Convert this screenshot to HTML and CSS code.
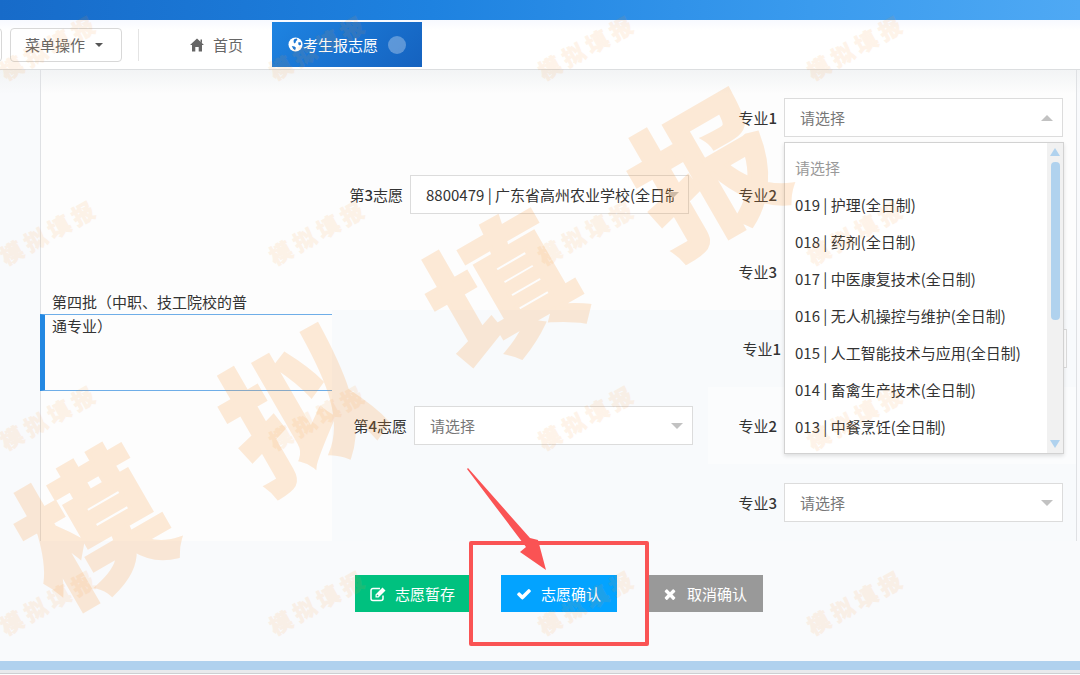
FILE: index.html
```
<!DOCTYPE html>
<html lang="zh-CN">
<head>
    <meta charset="utf-8">
    <title>考生报志愿</title>
    <link rel="stylesheet" href="styles.css">
</head>

<body>
    <div class="topbar"></div>

    <nav class="tabs">
        <button type="button" class="cut-btn" aria-label="back"></button>
        <button type="button" class="menu-btn">菜单操作 <span class="caret"></span></button>
        <span class="divider"></span>
        <a href="#" class="home">
            <svg class="icon" viewBox="0 0 16 16"><path d="M8 1.500L15 8h-2v6.500H9.700V10H6.300v4.500H3V8H1zM11.500 2.500H13V6l-1.500-1.400z"/></svg>
            首页
        </a>
        <a href="#" class="tab">
            <svg class="globe" viewBox="0 0 16 16"><circle cx="8" cy="8" r="7.500"/><path class="land" d="M7 2L9.500 1.500 10 3 8.500 4.500 8 6 7 7 6 5.500 6 3.500zM11 5.500L13.500 5.500 14 8 12.500 9 11 8zM4 9.500L7 10 8.500 11.500 7.500 14 5.500 12.500z"/></svg>
            <span>考生报志愿</span>
            <i class="dot"></i>
        </a>
    </nav>

    <main class="content">
        <div class="panel">
            <div class="batch">
                <div class="batch-hover"></div>
                <p>第四批（中职、技工院校的普通专业）</p>
            </div>

            <div class="school">
                <label for="school3">第<b>3</b>志愿</label>
                <div class="select filled">
                    <select id="school3"><option>8800479 | 广东省高州农业学校(全日制)</option></select>
                </div>
            </div>
            <div class="majors">
                <div class="field">
                    <label for="m31">专业<b>1</b></label>
                    <div class="select open">
                        <select id="m31"><option>请选择</option></select>
                        <div class="dropdown">
                            <ul>
                                <li class="tips">请选择</li>
                                <li>019 | 护理(全日制)</li>
                                <li>018 | 药剂(全日制)</li>
                                <li>017 | 中医康复技术(全日制)</li>
                                <li>016 | 无人机操控与维护(全日制)</li>
                                <li>015 | 人工智能技术与应用(全日制)</li>
                                <li>014 | 畜禽生产技术(全日制)</li>
                                <li>013 | 中餐烹饪(全日制)</li>
                            </ul>
                            <div class="scroll">
                                <span class="up"></span>
                                <span class="thumb"></span>
                                <span class="down"></span>
                            </div>
                        </div>
                    </div>
                </div>
                <div class="field">
                    <label for="m32">专业<b>2</b></label>
                    <div class="select"><select id="m32"><option>请选择</option></select></div>
                </div>
                <div class="field">
                    <label for="m33">专业<b>3</b></label>
                    <div class="select"><select id="m33"><option>请选择</option></select></div>
                </div>
            </div>

            <div class="school even">
                <label for="school4">第<b>4</b>志愿</label>
                <div class="select">
                    <select id="school4"><option>请选择</option></select>
                </div>
            </div>
            <div class="majors even">
                <div class="field wide">
                    <label for="m41">专业<b>1</b></label>
                    <div class="select"><select id="m41"><option>请选择</option></select></div>
                </div>
                <div class="field light">
                    <label for="m42">专业<b>2</b></label>
                    <div class="select"><select id="m42"><option>请选择</option></select></div>
                </div>
                <div class="field">
                    <label for="m43">专业<b>3</b></label>
                    <div class="select"><select id="m43"><option>请选择</option></select></div>
                </div>
            </div>
        </div>

        <div class="actions">
            <button type="button" class="btn save">
                <svg class="icon" viewBox="0 0 16 16"><path d="M13 9.500v3a2 2 0 0 1-2 2H3a2 2 0 0 1-2-2v-8a2 2 0 0 1 2-2h7" fill="none" stroke="#fff" stroke-width="1.500"/><path fill-rule="evenodd" d="M5.500 11.500V8.500L12.500 1.500 15.500 4.500 8.500 11.500zM6.700 9v1.300h1.300l.6-.6-1.300-1.300z"/></svg>
                志愿暂存
            </button>
            <div class="confirm-wrap">
                <button type="button" class="btn confirm">
                    <svg class="icon" viewBox="0 0 1792 1792"><path d="M1671 566q0 40-28 68l-724 724-136 136q-28 28-68 28t-68-28l-136-136-362-362q-28-28-28-68t28-68l136-136q28-28 68-28t68 28l294 295 656-657q28-28 68-28t68 28l136 136q28 28 28 68z"/></svg>
                    志愿确认
                </button>
                <div class="mark"></div>
                <svg class="arrow" viewBox="0 0 80 104"><path d="M0 1L1 0 63 70 71 72 79 102 53 84 59 79Z"/></svg>
            </div>
            <button type="button" class="btn cancel">
                <svg class="icon" viewBox="0 0 1792 1792"><path d="M1490 1322q0 40-28 68l-136 136q-28 28-68 28t-68-28l-294-294-294 294q-28 28-68 28t-68-28l-136-136q-28-28-28-68t28-68l294-294-294-294q-28-28-28-68t28-68l136-136q28-28 68-28t68 28l294 294 294-294q28-28 68-28t68 28l136 136q28 28 28 68t-28 68l-294 294 294 294q28 28 28 68z"/></svg>
                取消确认
            </button>
        </div>
    </main>

    <footer class="bottom"></footer>

    <!-- watermarks -->
    <div class="wm" aria-hidden="true">
        <div class="wm-big"><span>模</span><span>拟</span><span>填</span><span>报</span></div>
        <div class="wm-grid" id="wm"></div>
    </div>
    <script>
        var html = "";
        for (var i = 0; i < 16; i++) {
            html += "<div class=\"wm-cell\"><div class=\"wm-small\"><span>模</span><span>拟</span><span>填</span><span>报</span></div></div>";
        }
        document.getElementById("wm").innerHTML = html;
    </script>
</body>
</html>
```
FILE: styles.css
```
* {
    box-sizing: border-box;
}
body {
    margin: 0;
    position: relative;
    min-height: 100vh;
    overflow-x: hidden;
    background: #fff;
    color: #333;
    font: 15px/24px "Noto Sans CJK SC", sans-serif;
}
button, select {
    font: inherit;
    color: inherit;
}
.icon {
    width: 16px;
    height: 16px;
    fill: currentColor;
}

/* top */
.topbar {
    height: 20px;
    background: linear-gradient(90deg, #176bc9, #1e82e0 40%, #3a9bee 75%, #4fa9f4);
}
.tabs {
    display: flex;
    align-items: center;
    height: 50px;
    border-bottom: 1px solid #dcdee0;
    color: #666;
    background: linear-gradient(#f7f9ff, #fff 10px);
}
.cut-btn, .menu-btn {
    height: 34px;
    border: 1px solid #d8d8d8;
    border-radius: 4px;
    background: #fff;
}
.cut-btn {
    width: 12px;
    margin-left: -10px;
    padding: 0;
}
.menu-btn {
    display: flex;
    align-items: center;
    gap: 10px;
    width: 112px;
    margin-left: 8px;
    padding: 0 0 0 14px;
}
.caret {
    border: 4px solid transparent;
    border-top-color: #555;
    border-bottom: 0;
}
.divider {
    height: 32px;
    margin-left: 16px;
    border-left: 1px solid #e4e4e4;
}
.home {
    display: flex;
    align-items: center;
    gap: 8px;
    margin: 0 29px 0 50px;
    color: #666;
    text-decoration: none;
}
.tab {
    display: flex;
    align-items: center;
    height: 45px;
    padding: 0 16px;
    color: #fff;
    text-decoration: none;
    background: linear-gradient(135deg, #1e84e2, #1562bf);
}
.globe {
    width: 15px;
    height: 15px;
    fill: #fff;
}
.land {
    fill: #1d78d4;
}
.dot {
    width: 18px;
    height: 18px;
    margin-left: 10px;
    border-radius: 50%;
    background: rgba(255, 255, 255, .3);
}

/* form */
.content {
    padding: 0 3px 49px 40px;
    background: linear-gradient(#f2f4f5, #f9fafc 24px);
}
.panel {
    display: grid;
    grid-template-columns: 291fr 376fr 368fr;
    padding-top: 9px;
    border: solid #dfe1e4;
    border-width: 0 1px;
    background: linear-gradient(#f2f4f5, #fdfdfd 24px);
}
.batch {
    position: relative;
    grid-row: 1 / 3;
    display: flex;
    align-items: center;
    padding: 8px 0 0 11px;
}
.batch p {
    position: relative;
    width: 200px;
    margin: 0;
}
.batch-hover {
    position: absolute;
    top: 235px;
    left: -1px;
    right: 0;
    height: 77px;
    border: solid #6faee8;
    border-width: 1px 0;
    border-left: 5px solid #2388e2;
}
.school, .field {
    display: flex;
    align-items: center;
    justify-content: flex-end;
    gap: 7px;
}
.school b, .field b {
    font-weight: 500;
}
.school {
    padding-right: 19px;
}
.school.even {
    padding-right: 15px;
}
.even {
    background: #f8fafc;
}
.field {
    height: 77px;
    padding-right: 13px;
}
.field.wide {
    padding-right: 9px;
}
.field.light {
    background: #fbfcfd;
}
.select {
    position: relative;
    width: 279px;
}
.select select {
    display: block;
    width: 100%;
    height: 39px;
    padding: 0 14px 0 15px;
    border: 1px solid #dcdcdc;
    border-radius: 0;
    background: #fff;
    color: #777;
    -webkit-appearance: none;
    appearance: none;
}
.select.filled select {
    color: #333;
}
.select::after {
    content: "";
    position: absolute;
    top: 17px;
    right: 10px;
    border: 6px solid transparent;
    border-top-color: #c2c2c2;
    border-bottom: 0;
}
.select.open::after {
    border-top: 0;
    border-bottom: 6px solid #c2c2c2;
}
.dropdown {
    position: absolute;
    z-index: 5;
    top: 44px;
    left: 0;
    display: flex;
    width: 280px;
    height: 312px;
    border: 1px solid #d2d2d2;
    background: #fff;
    box-shadow: 0 2px 4px rgba(0, 0, 0, .12);
}
.dropdown ul {
    flex: 1;
    margin: 0;
    padding: 6px 0;
    list-style: none;
}
.dropdown li {
    padding: 0 10px;
    line-height: 37px;
    white-space: nowrap;
}
.dropdown .tips {
    color: #999;
}
.scroll {
    display: flex;
    flex-direction: column;
    align-items: center;
    width: 16px;
    padding: 5px 0;
    background: #f1f1f1;
}
.up, .down {
    border: 5px solid transparent;
}
.up {
    border-top: 0;
    border-bottom: 8px solid #b0d2ee;
}
.down {
    margin-top: auto;
    border-bottom: 0;
    border-top: 8px solid #b0d2ee;
}
.thumb {
    width: 9px;
    height: 158px;
    margin-top: 6px;
    border-radius: 4px;
    background: #b0d2ee;
}

/* buttons */
.actions {
    display: flex;
    justify-content: center;
    gap: 30px;
    padding-top: 34px;
}
.btn {
    display: flex;
    align-items: center;
    justify-content: center;
    gap: 9px;
    width: 116px;
    height: 37px;
    padding: 0;
    border: 0;
    color: #fff;
}
.save {
    background: #00c17f;
}
.confirm {
    background: #03a3ff;
}
.cancel {
    background: #999;
}
.confirm-wrap {
    position: relative;
    z-index: 2;
}
.mark {
    position: absolute;
    inset: -34px -32px -34px -32px;
    border: 4px solid #fa5354;
    border-radius: 2px;
}
.arrow {
    position: absolute;
    top: -107px;
    left: -34px;
    width: 80px;
    height: 104px;
    fill: #fa5354;
}
.bottom {
    height: 13px;
    border-top: 9px solid #b0d1ee;
    border-bottom: 1px solid #cdd0d2;
    background: #e8eaec;
}

/* watermark */
.wm {
    position: absolute;
    z-index: 10;
    top: 0;
    left: 0;
    right: 0;
    height: 661px;
    overflow: hidden;
    pointer-events: none;
    font-weight: bold;
    color: #fa9632;
}
.wm-big {
    position: absolute;
    top: 268px;
    left: -30px;
    display: flex;
    gap: 92px;
    font-size: 144px;
    line-height: 150px;
    opacity: .19;
    transform: rotate(-30deg);
    -webkit-text-stroke: 4px #fa9632;
}
.wm-grid {
    position: absolute;
    top: 19px;
    left: -5px;
    display: grid;
    grid-template-columns: repeat(4, 269px);
    grid-auto-rows: 185px;
}
.wm-small {
    display: flex;
    gap: 5px;
    width: 103px;
    font-size: 22px;
    line-height: 56px;
    opacity: .1;
    transform: rotate(-29deg);
    -webkit-text-stroke: 1px #fa9632;
}
```
